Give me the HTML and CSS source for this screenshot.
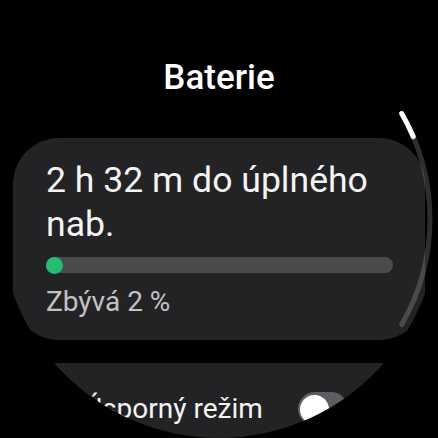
FILE: index.html
```
<!DOCTYPE html>
<html lang="cs">
<head>
<meta charset="utf-8">
<title>Baterie</title>
<link rel="stylesheet" href="styles.css">
</head>
<body>
<div class="screen">
  <div class="content">
    <h1 class="title">Baterie</h1>
    <section class="card battery">
      <p class="estimate">2 h 32 m do úplného nab.</p>
      <div class="bar"><div class="fill"></div></div>
      <p class="remaining">Zbývá 2 %</p>
    </section>
    <section class="card saver">
      <span class="label">Úsporný režim</span>
      <span class="toggle"><span class="thumb"></span></span>
    </section>
  </div>
  <svg class="scroll" width="438" height="438" viewBox="0 0 438 438">
    <path class="track" d="M401.7 113.5 A211 211 0 0 1 401.7 324.5" />
    <path class="thumbbar" d="M401.7 113.5 A211 211 0 0 1 413.2 136.6" />
  </svg>
</div>
</body>
</html>
```
FILE: styles.css
```
html, body {
  margin: 0;
  padding: 0;
  background: #000;
}
body {
  font-family: Roboto, "Liberation Sans", sans-serif;
  color: #f2f2f2;
}
.screen {
  position: relative;
  width: 438px;
  height: 438px;
  border-radius: 50%;
  overflow: hidden;
  background: #000;
}
.content {
  display: flex;
  flex-direction: column;
  padding: 58px 13px 0;
}
.title {
  margin: 0;
  font-size: 35px;
  line-height: 40px;
  font-weight: 500;
  text-align: center;
  color: #ffffff;
}
.card {
  background: #232325;
  border-radius: 46px;
}
.battery {
  margin-top: 40px;
  padding: 20px 32px 21px 33px;
}
.estimate {
  margin: 0;
  font-size: 35.6px;
  line-height: 44px;
  color: #f4f4f4;
}
.bar {
  margin-top: 11px;
  height: 16px;
  border-radius: 8px;
  background: #4a4a4d;
  display: flex;
}
.fill {
  width: 17px;
  height: 17px;
  border-radius: 50%;
  background: #23bd73;
}
.remaining {
  margin: 12px 0 0;
  font-size: 28px;
  line-height: 34px;
  color: #c2c2c5;
}
.saver {
  margin-top: 23px;
  height: 120px;
  padding: 29px 77px 0 71px;
  display: flex;
  align-items: flex-start;
  justify-content: space-between;
}
.label {
  font-size: 28px;
  line-height: 34px;
  color: #f4f4f4;
}
.toggle {
  width: 50px;
  height: 34px;
  border-radius: 17px;
  background: #5e5e62;
  display: flex;
  align-items: center;
  padding: 0 2px;
  box-sizing: border-box;
}
.thumb {
  width: 29px;
  height: 29px;
  border-radius: 50%;
  background: #ffffff;
}
.scroll {
  position: absolute;
  left: 0;
  top: 0;
}
.track {
  fill: none;
  stroke: rgba(255, 255, 255, 0.18);
  stroke-width: 5;
  stroke-linecap: round;
}
.thumbbar {
  fill: none;
  stroke: #ffffff;
  stroke-width: 5;
  stroke-linecap: round;
}
```
